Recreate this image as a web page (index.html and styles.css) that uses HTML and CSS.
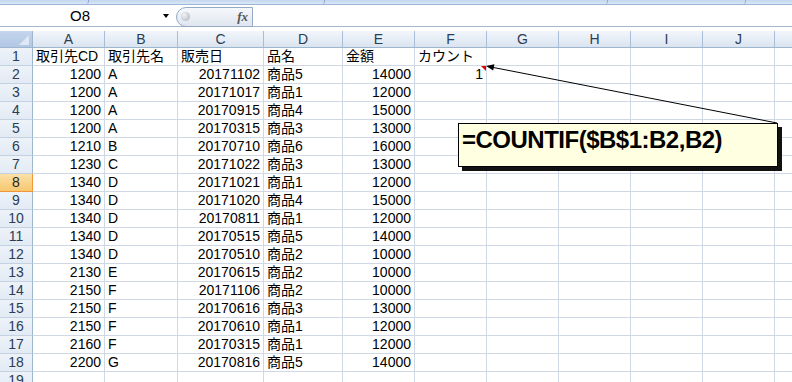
FILE: index.html
```html
<!DOCTYPE html>
<html lang="ja">
<head>
    <meta charset="UTF-8">
    <title>Book1 - COUNTIF</title>
    <link rel="stylesheet" href="styles.css">
</head>
<body>
    <div class="ribbon-edge">
        <span class="seg seg-1"></span>
        <span class="seg seg-2"></span>
        <span class="seg seg-3"></span>
        <span class="seg seg-4"></span>
        <span class="seg seg-5"></span>
    </div>

    <div class="formula-bar">
        <div class="name-box">
            <span class="name">O8</span>
            <span class="drop"></span>
        </div>
        <div class="fx-button">
            <span class="knob"></span>
            <span class="fx">fx</span>
        </div>
        <div class="formula-input"></div>
    </div>

    <div class="sheet">
        <div class="row head">
            <div class="corner"></div>
            <div class="col-head">A</div>
            <div class="col-head">B</div>
            <div class="col-head">C</div>
            <div class="col-head">D</div>
            <div class="col-head">E</div>
            <div class="col-head">F</div>
            <div class="col-head">G</div>
            <div class="col-head">H</div>
            <div class="col-head">I</div>
            <div class="col-head">J</div>
            <div class="col-head"></div>
        </div>
        <div class="row">
            <div class="row-head">1</div>
            <div class="cell">取引先CD</div>
            <div class="cell">取引先名</div>
            <div class="cell">販売日</div>
            <div class="cell">品名</div>
            <div class="cell">金額</div>
            <div class="cell">カウント</div>
            <div class="cell"></div><div class="cell"></div><div class="cell"></div><div class="cell"></div><div class="cell"></div>
        </div>
        <div class="row">
            <div class="row-head">2</div>
            <div class="cell num">1200</div><div class="cell">A</div><div class="cell num">20171102</div><div class="cell">商品5</div><div class="cell num">14000</div>
            <div class="cell num has-comment">1<span class="comment-mark"></span></div>
            <div class="cell"></div><div class="cell"></div><div class="cell"></div><div class="cell"></div><div class="cell"></div>
        </div>
        <div class="row">
            <div class="row-head">3</div>
            <div class="cell num">1200</div><div class="cell">A</div><div class="cell num">20171017</div><div class="cell">商品1</div><div class="cell num">12000</div>
            <div class="cell"></div><div class="cell"></div><div class="cell"></div><div class="cell"></div><div class="cell"></div><div class="cell"></div>
        </div>
        <div class="row">
            <div class="row-head">4</div>
            <div class="cell num">1200</div><div class="cell">A</div><div class="cell num">20170915</div><div class="cell">商品4</div><div class="cell num">15000</div>
            <div class="cell"></div><div class="cell"></div><div class="cell"></div><div class="cell"></div><div class="cell"></div><div class="cell"></div>
        </div>
        <div class="row">
            <div class="row-head">5</div>
            <div class="cell num">1200</div><div class="cell">A</div><div class="cell num">20170315</div><div class="cell">商品3</div><div class="cell num">13000</div>
            <div class="cell"></div><div class="cell"></div><div class="cell"></div><div class="cell"></div><div class="cell"></div><div class="cell"></div>
        </div>
        <div class="row">
            <div class="row-head">6</div>
            <div class="cell num">1210</div><div class="cell">B</div><div class="cell num">20170710</div><div class="cell">商品6</div><div class="cell num">16000</div>
            <div class="cell"></div><div class="cell"></div><div class="cell"></div><div class="cell"></div><div class="cell"></div><div class="cell"></div>
        </div>
        <div class="row">
            <div class="row-head">7</div>
            <div class="cell num">1230</div><div class="cell">C</div><div class="cell num">20171022</div><div class="cell">商品3</div><div class="cell num">13000</div>
            <div class="cell"></div><div class="cell"></div><div class="cell"></div><div class="cell"></div><div class="cell"></div><div class="cell"></div>
        </div>
        <div class="row">
            <div class="row-head active">8</div>
            <div class="cell num">1340</div><div class="cell">D</div><div class="cell num">20171021</div><div class="cell">商品1</div><div class="cell num">12000</div>
            <div class="cell"></div><div class="cell"></div><div class="cell"></div><div class="cell"></div><div class="cell"></div><div class="cell"></div>
        </div>
        <div class="row">
            <div class="row-head">9</div>
            <div class="cell num">1340</div><div class="cell">D</div><div class="cell num">20171020</div><div class="cell">商品4</div><div class="cell num">15000</div>
            <div class="cell"></div><div class="cell"></div><div class="cell"></div><div class="cell"></div><div class="cell"></div><div class="cell"></div>
        </div>
        <div class="row">
            <div class="row-head">10</div>
            <div class="cell num">1340</div><div class="cell">D</div><div class="cell num">20170811</div><div class="cell">商品1</div><div class="cell num">12000</div>
            <div class="cell"></div><div class="cell"></div><div class="cell"></div><div class="cell"></div><div class="cell"></div><div class="cell"></div>
        </div>
        <div class="row">
            <div class="row-head">11</div>
            <div class="cell num">1340</div><div class="cell">D</div><div class="cell num">20170515</div><div class="cell">商品5</div><div class="cell num">14000</div>
            <div class="cell"></div><div class="cell"></div><div class="cell"></div><div class="cell"></div><div class="cell"></div><div class="cell"></div>
        </div>
        <div class="row">
            <div class="row-head">12</div>
            <div class="cell num">1340</div><div class="cell">D</div><div class="cell num">20170510</div><div class="cell">商品2</div><div class="cell num">10000</div>
            <div class="cell"></div><div class="cell"></div><div class="cell"></div><div class="cell"></div><div class="cell"></div><div class="cell"></div>
        </div>
        <div class="row">
            <div class="row-head">13</div>
            <div class="cell num">2130</div><div class="cell">E</div><div class="cell num">20170615</div><div class="cell">商品2</div><div class="cell num">10000</div>
            <div class="cell"></div><div class="cell"></div><div class="cell"></div><div class="cell"></div><div class="cell"></div><div class="cell"></div>
        </div>
        <div class="row">
            <div class="row-head">14</div>
            <div class="cell num">2150</div><div class="cell">F</div><div class="cell num">20171106</div><div class="cell">商品2</div><div class="cell num">10000</div>
            <div class="cell"></div><div class="cell"></div><div class="cell"></div><div class="cell"></div><div class="cell"></div><div class="cell"></div>
        </div>
        <div class="row">
            <div class="row-head">15</div>
            <div class="cell num">2150</div><div class="cell">F</div><div class="cell num">20170616</div><div class="cell">商品3</div><div class="cell num">13000</div>
            <div class="cell"></div><div class="cell"></div><div class="cell"></div><div class="cell"></div><div class="cell"></div><div class="cell"></div>
        </div>
        <div class="row">
            <div class="row-head">16</div>
            <div class="cell num">2150</div><div class="cell">F</div><div class="cell num">20170610</div><div class="cell">商品1</div><div class="cell num">12000</div>
            <div class="cell"></div><div class="cell"></div><div class="cell"></div><div class="cell"></div><div class="cell"></div><div class="cell"></div>
        </div>
        <div class="row">
            <div class="row-head">17</div>
            <div class="cell num">2160</div><div class="cell">F</div><div class="cell num">20170315</div><div class="cell">商品1</div><div class="cell num">12000</div>
            <div class="cell"></div><div class="cell"></div><div class="cell"></div><div class="cell"></div><div class="cell"></div><div class="cell"></div>
        </div>
        <div class="row">
            <div class="row-head">18</div>
            <div class="cell num">2200</div><div class="cell">G</div><div class="cell num">20170816</div><div class="cell">商品5</div><div class="cell num">14000</div>
            <div class="cell"></div><div class="cell"></div><div class="cell"></div><div class="cell"></div><div class="cell"></div><div class="cell"></div>
        </div>
        <div class="row">
            <div class="row-head">19</div>
            <div class="cell"></div><div class="cell"></div><div class="cell"></div><div class="cell"></div><div class="cell"></div>
            <div class="cell"></div><div class="cell"></div><div class="cell"></div><div class="cell"></div><div class="cell"></div><div class="cell"></div>
        </div>
    </div>

    <!-- comment arrow from the callout to F2 -->
    <svg class="arrow" width="792" height="382" viewBox="0 0 792 382">
        <line x1="777" y1="123" x2="491" y2="67" stroke="#000" stroke-width="1"/>
        <polygon points="486,66 494.4,64.2 493.2,70.6" fill="#000"/>
    </svg>

    <div class="callout">=COUNTIF($B$1:B2,B2)</div>
</body>
</html>
```

FILE: styles.css
```css
html, body {
    margin: 0;
    padding: 0;
}
body {
    position: relative;
    width: 792px;
    height: 382px;
    overflow: hidden;
    background: #fff;
    font-family: "Liberation Sans", "Noto Sans CJK JP", sans-serif;
    font-size: 14px;
    color: #000;
}

/* bottom edge of the ribbon */
.ribbon-edge {
    display: flex;
    height: 4px;
    background: linear-gradient(#c3d6ee, #dbe7f6);
    border-bottom: 1px solid #9db5d6;
}
.seg {
    border-right: 1px solid #8eaad0;
    border-radius: 0 0 3px 0;
}
.seg-1 { width: 88px; }
.seg-2 { width: 235px; }
.seg-3 { width: 282px; }
.seg-4 { width: 137px; }
.seg-5 { flex: 1; border-right: none; }

/* name box + formula bar */
.formula-bar {
    display: flex;
    height: 21px;
    background: #fff;
    border-bottom: 1px solid #a2b6cf;
}
.name-box {
    width: 176px;
    display: flex;
    align-items: center;
}
.name {
    width: 160px;
    text-align: center;
    font-size: 15px;
}
.drop {
    width: 0;
    height: 0;
    margin-left: 3px;
    border-left: 3.5px solid transparent;
    border-right: 3.5px solid transparent;
    border-top: 4px solid #000;
}
.fx-button {
    position: relative;
    width: 75px;
    height: 18px;
    margin-top: 2px;
    border: 1px solid #93a9c4;
    border-radius: 10px 0 0 10px;
    background: linear-gradient(#f6f8fb, #dfe6ef);
}
.knob {
    position: absolute;
    left: 4px;
    top: 4px;
    width: 9px;
    height: 9px;
    border-radius: 50%;
    background: radial-gradient(circle at 35% 35%, #f2f4f7, #a9b1bc);
}
.fx {
    position: absolute;
    right: 4px;
    top: 1px;
    font-family: "Liberation Serif", serif;
    font-style: italic;
    font-weight: bold;
    font-size: 13px;
    color: #555;
}
.formula-input {
    flex: 1;
    background: #fff;
}

/* grid */
.sheet {
    margin-top: 4px;
}
.row {
    display: grid;
    grid-template-columns: 33px 72px 73px 86px 79px 72px 72px 72px 72px 72px 72px 72px;
    height: 18px;
}
.row.head {
    height: 17px;
}
.cell, .row-head, .col-head, .corner {
    box-sizing: border-box;
    overflow: hidden;
    white-space: nowrap;
}
.cell {
    position: relative;
    padding: 0 3px;
    line-height: 17px;
    border-right: 1px solid #d0d7e5;
    border-bottom: 1px solid #d0d7e5;
}
.num {
    text-align: right;
}
.col-head {
    text-align: center;
    line-height: 16px;
    color: #2a3d55;
    background: linear-gradient(#f3f6fb, #dae4f0);
    border-right: 1px solid #a9bed6;
    border-bottom: 1px solid #9eb6ce;
}
.corner {
    position: relative;
    background: linear-gradient(#c4d5ec, #b2c7e4);
    border-right: 1px solid #9eb6ce;
    border-bottom: 1px solid #9eb6ce;
}
.corner::after {
    content: "";
    position: absolute;
    right: 3px;
    bottom: 2px;
    width: 0;
    height: 0;
    border-left: 10px solid transparent;
    border-bottom: 10px solid #dfe8f4;
}
.row-head {
    text-align: center;
    line-height: 17px;
    color: #2a3d55;
    background: linear-gradient(#eef3f9, #e2eaf4);
    border-right: 1px solid #9eb6ce;
    border-bottom: 1px solid #c3d1e2;
}
.row-head.active {
    color: #1f1f1f;
    background: linear-gradient(#fbe0a8, #f6c86f);
    border-right-color: #f29536;
    border-bottom-color: #f29536;
}

/* red comment indicator in F2 */
.comment-mark {
    position: absolute;
    top: 0;
    right: 0;
    width: 0;
    height: 0;
    border-left: 5px solid transparent;
    border-top: 5px solid #e00000;
}

/* comment callout */
.arrow {
    position: absolute;
    left: 0;
    top: 0;
    pointer-events: none;
}
.callout {
    position: absolute;
    left: 458px;
    top: 123px;
    width: 320px;
    height: 44px;
    box-sizing: border-box;
    padding: 3px 0 0 3px;
    background: #ffffe1;
    border: 1px solid #000;
    box-shadow: 4px 4px 0 #111;
    font-family: "Liberation Sans", Arial, sans-serif;
    font-weight: bold;
    font-size: 24px;
    letter-spacing: -0.5px;
    line-height: 26px;
    white-space: nowrap;
}
```
